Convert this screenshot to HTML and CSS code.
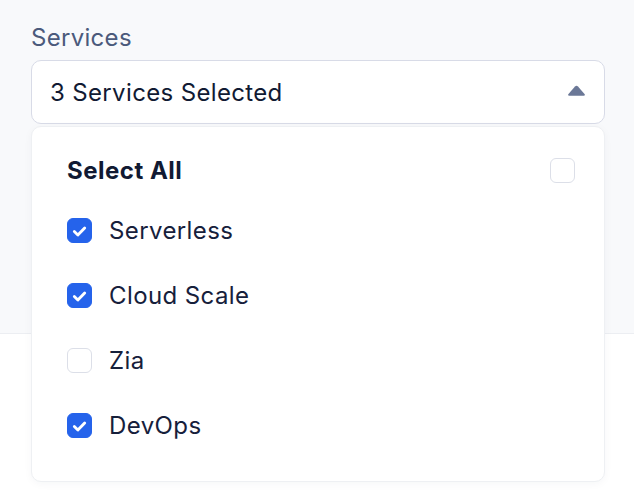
FILE: index.html
```html
<!DOCTYPE html>
<html lang="en">
<head>
<meta charset="utf-8">
<title>Services</title>
<link rel="stylesheet" href="styles.css">
</head>
<body>
  <div class="page">
    <section class="form-area">
      <div class="field">
        <label class="field-label">Services</label>
        <div class="select">
          <span class="select-value">3 Services Selected</span>
          <svg class="caret" width="19" height="12" viewBox="0 0 18 11" aria-hidden="true">
            <path d="M7.6 1.2 Q9 -0.3 10.4 1.2 L16.6 8.4 Q17.6 10 15.8 10 L2.2 10 Q0.4 10 1.4 8.4 Z" fill="#6b7897"/>
          </svg>
        </div>
        <div class="menu">
          <div class="menu-row select-all">
            <span class="row-label">Select All</span>
            <span class="box"></span>
          </div>
          <div class="menu-row">
            <span class="box checked"><svg viewBox="0 0 24 24"><path d="M6.6 12.6 L10.3 16.1 L17.4 8.8" fill="none" stroke="#fff" stroke-width="3" stroke-linecap="round" stroke-linejoin="round"/></svg></span>
            <span class="row-label">Serverless</span>
          </div>
          <div class="menu-row">
            <span class="box checked"><svg viewBox="0 0 24 24"><path d="M6.6 12.6 L10.3 16.1 L17.4 8.8" fill="none" stroke="#fff" stroke-width="3" stroke-linecap="round" stroke-linejoin="round"/></svg></span>
            <span class="row-label">Cloud Scale</span>
          </div>
          <div class="menu-row">
            <span class="box"></span>
            <span class="row-label">Zia</span>
          </div>
          <div class="menu-row">
            <span class="box checked"><svg viewBox="0 0 24 24"><path d="M6.6 12.6 L10.3 16.1 L17.4 8.8" fill="none" stroke="#fff" stroke-width="3" stroke-linecap="round" stroke-linejoin="round"/></svg></span>
            <span class="row-label">DevOps</span>
          </div>
        </div>
      </div>
    </section>
    <section class="below"></section>
  </div>
</body>
</html>
```

FILE: styles.css
```css
* { box-sizing: border-box; }

html, body {
  margin: 0;
  padding: 0;
  background: #ffffff;
  font-family: Inter, "Noto Sans", sans-serif;
}

.page {
  width: 634px;
  height: 502px;
  overflow: hidden;
}

.form-area {
  background: #f8f9fb;
  height: 334px;
  padding: 24px 29px 0 31px;
  border-bottom: 1px solid #eceef2;
}

.below {
  height: 168px;
  background: #ffffff;
}

.field {
  position: relative;
}

.field-label {
  display: block;
  font-size: 24px;
  letter-spacing: 0.3px;
  line-height: 28px;
  color: #4b5a7b;
  margin-bottom: 8px;
}

.select {
  height: 64px;
  background: #ffffff;
  border: 1px solid #d8dbe7;
  border-radius: 10px;
  display: flex;
  align-items: center;
  justify-content: space-between;
  padding: 0 18px 0 18px;
}

.select-value {
  font-size: 24px;
  letter-spacing: 0.35px;
  color: #111a33;
}

.caret {
  display: block;
  margin-top: -2px;
}

.menu {
  position: absolute;
  left: 0;
  right: 0;
  top: 102px;
  height: 356px;
  background: #ffffff;
  border: 1px solid #eef0f3;
  border-radius: 10px;
  box-shadow: 0 2px 8px rgba(30, 40, 70, 0.04);
  padding: 15px 29px 0 35px;
}

.menu-row {
  display: flex;
  align-items: center;
  height: 65px;
  gap: 17px;
}

.menu-row.select-all {
  height: 56px;
  justify-content: space-between;
}

.row-label {
  font-size: 24px;
  letter-spacing: 0.4px;
  color: #16203b;
}

.select-all .row-label {
  font-weight: 700;
  letter-spacing: 0.5px;
  color: #111a33;
}

.box {
  width: 25px;
  height: 25px;
  flex: none;
  border: 1px solid #dcdfe8;
  border-radius: 6px;
  background: #ffffff;
  display: flex;
  align-items: center;
  justify-content: center;
}

.box.checked {
  background: #2563eb;
  border-color: #2563eb;
}

.box svg {
  display: block;
  width: 24px;
  height: 24px;
}
```
